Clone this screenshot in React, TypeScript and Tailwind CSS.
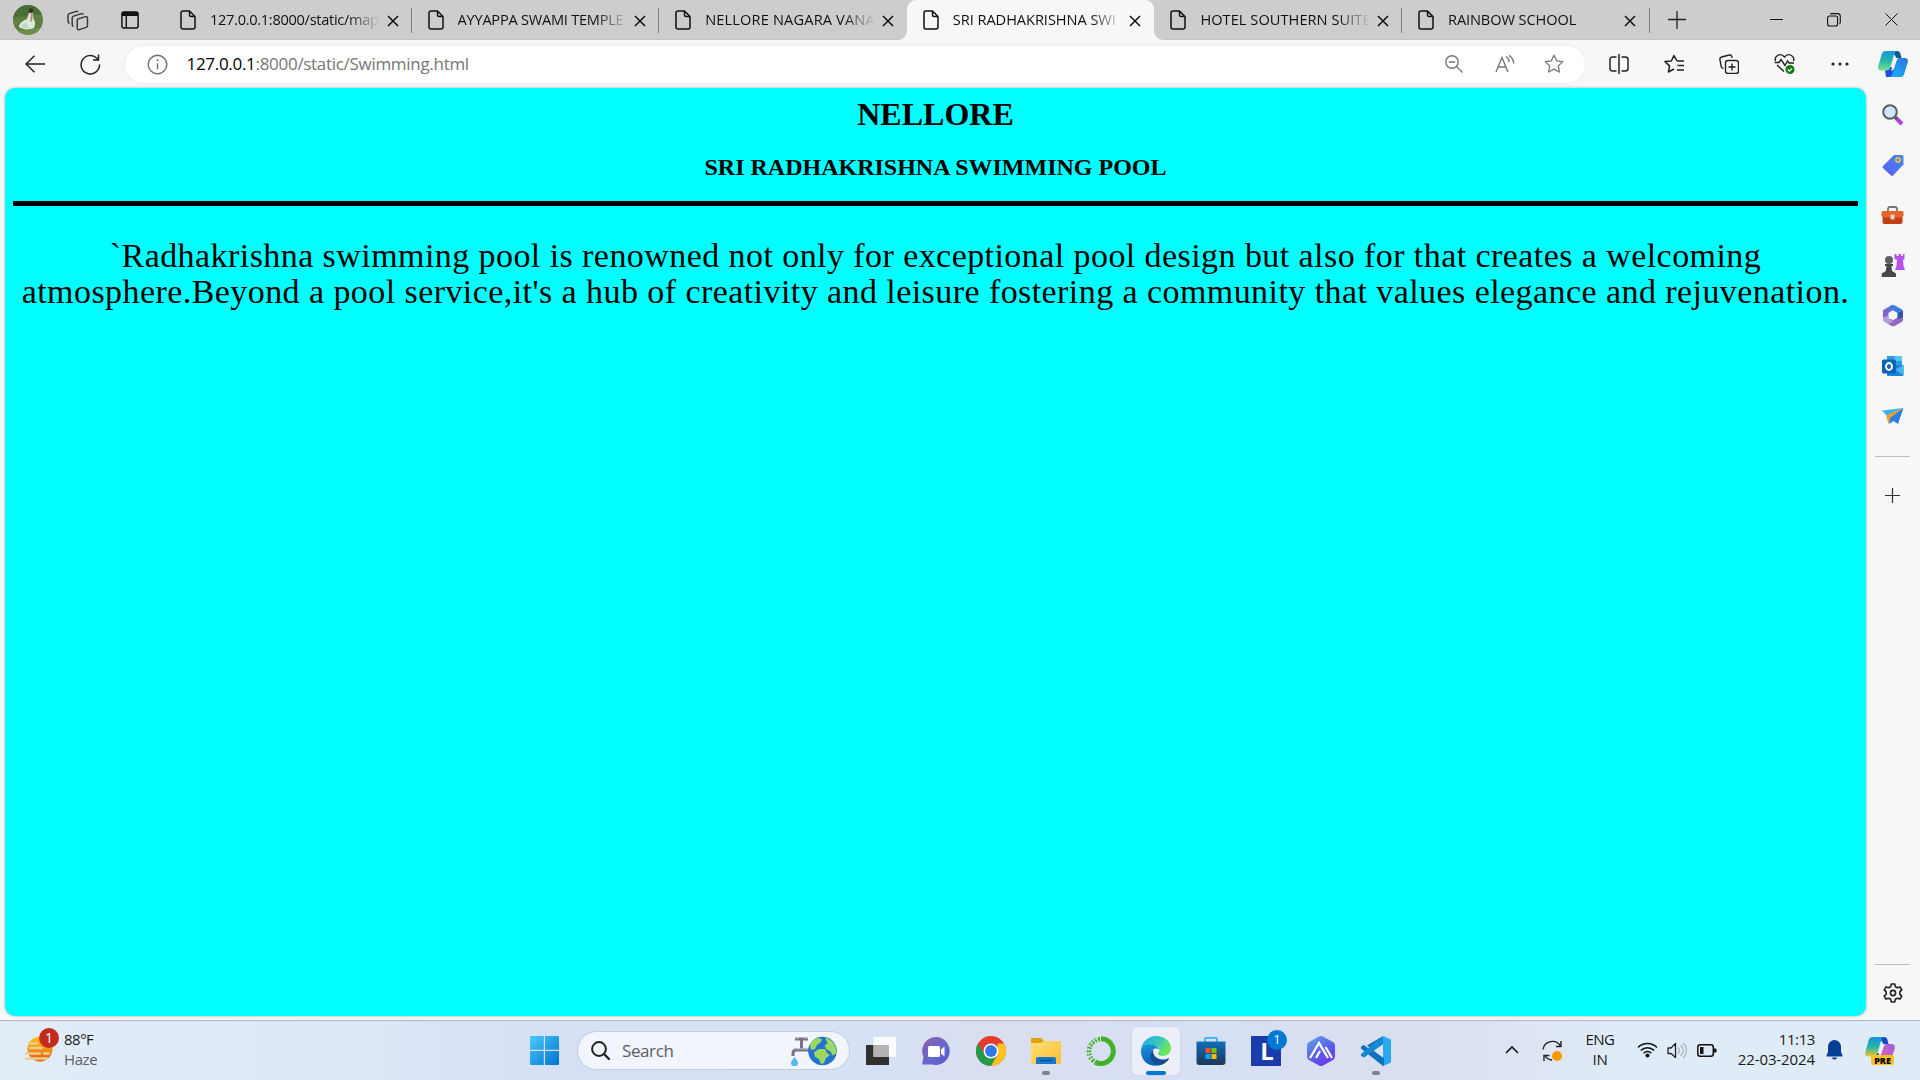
import React from "react";

const Svg = ({ w, h, vb, children, className = "" }: { w: number; h: number; vb?: string; children: React.ReactNode; className?: string }) => (
  <svg width={w} height={h} viewBox={vb ?? `0 0 ${w} ${h}`} fill="none" className={"block shrink-0 " + className}>{children}</svg>
);

const tabs = [
  { t: "127.0.0.1:8000/static/map", c: "tracking-[-0.3px]" },
  { t: "AYYAPPA SWAMI TEMPLE", c: "tracking-[-0.25px]" },
  { t: "NELLORE NAGARA VANA", c: "tracking-[0.15px]" },
  { t: "SRI RADHAKRISHNA SWI", c: "tracking-[-0.05px]" },
  { t: "HOTEL SOUTHERN SUITE", c: "tracking-[0.05px]" },
  { t: "RAINBOW SCHOOL", c: "tracking-[-0.1px]" },
];

function Tab({ t, c, active, sep }: { t: string; c: string; active: boolean; sep: boolean }) {
  return (
    <div className={"relative flex h-10 w-[247.6px] shrink-0 items-center pl-4 " + (active ? "rounded-t-[9px] bg-[#f7f7f7]" : "")}>
      {active && (
        <>
          <Svg w={9} h={9} className="absolute bottom-0 -left-[9px]"><path d="M9 0V9H0A9 9 0 0 0 9 0" fill="#f7f7f7" /></Svg>
          <Svg w={9} h={9} className="absolute bottom-0 -right-[9px]"><path d="M0 0V9H9A9 9 0 0 1 0 0" fill="#f7f7f7" /></Svg>
        </>
      )}
      <Svg w={16} h={20}><path d="M3 1H9.5L15 6.5V17a2 2 0 0 1-2 2H3a2 2 0 0 1-2-2V3a2 2 0 0 1 2-2ZM9.5 1V5a1.5 1.5 0 0 0 1.5 1.5H15" stroke="#111" strokeWidth="1.5" /></Svg>
      <div className="mb-[2px] ml-[14px] w-[170px] [mask-image:linear-gradient(to_right,black_138px,transparent_170px)]">
        <span className={"whitespace-nowrap text-[14.6px] text-[#111] " + c}>{t}</span>
      </div>
      <Svg w={12} h={12} className="mt-[1px] ml-[6.5px]"><path d="M1 1l10 10M11 1L1 11" stroke="#111" strokeWidth="1.5" /></Svg>
      {sep && <div className="absolute top-2 right-0 h-[25px] w-px bg-[#808080]" />}
    </div>
  );
}

const TabStrip = () => (
  <div className="flex h-10 items-center bg-[#cdcdcd] shadow-[inset_0_-1px_0_#c3c3c3]">
    <div className="flex w-[164px] shrink-0 items-center">
      <Svg w={30} h={30} className="ml-[13px]">
        <defs><clipPath id="av"><circle cx="15" cy="15" r="15" /></clipPath></defs>
        <g clipPath="url(#av)">
          <path d="M0 0h30v30H0z" fill="#5d8040" /><path d="M0 0h30v9L0 13z" fill="#486f35" /><path d="M4 26l22-3v7H4z" fill="#6f8f48" />
          <path d="M16 8l4 0 .5 6c2 2 2 6 .5 9-5 2-11 2-15-1 0-4 4-6 8-8z" fill="#dce9dc" /><path d="M8 20l5-3 3 6-6 0z" fill="#c1d8c6" />
          <circle cx="18" cy="5.5" r="2.3" fill="#4a2d29" /><path d="M18 8l2 1-1 7-2 1z" fill="#b98d78" />
        </g>
      </Svg>
      <Svg w={22} h={21} className="ml-[24px]">
        <g stroke="#333" strokeWidth="1.4" strokeLinejoin="round">
          <path d="M10.5 9.2l8-2.5a1.500 1.500 0 0 1 2 1.400v7.500a2 2 0 0 1-1.300 1.800l-7 2.300a1.500 1.500 0 0 1-2-1.400V10.500z" />
          <path d="M6.500 16.500l-.8-.6a2 2 0 0 1-.5-1.300V8a2 2 0 0 1 1.300-1.800l8-2.500a1.500 1.500 0 0 1 1.800.8" />
          <path d="M2.500 13.500L1.500 12.500a2 2 0 0 1-.5-1.300V5.500a2 2 0 0 1 1.300-1.800l7-2.400a1.500 1.500 0 0 1 1.800.6" />
        </g>
      </Svg>
      <Svg w={18} h={18} className="ml-[32px]"><rect x=".9" y=".9" width="16.2" height="16.2" rx="2" stroke="#111" strokeWidth="1.5" /><path d="M1 1h16v4H1z" fill="#111" /><path d="M5.300 5v12" stroke="#111" strokeWidth="1.4" /></Svg>
      <div className="ml-[25px] h-[25px] w-px bg-[#808080]" />
    </div>
    {tabs.map((x, i) => <Tab key={x.t} {...x} active={i === 3} sep={i !== 2 && i !== 3} />)}
    <Svg w={18} h={18} className="ml-[18px]"><path d="M9 0v18M0 8.500h18" stroke="#222" strokeWidth="1.3" /></Svg>
    <div className="ml-auto flex items-center pr-[22px]">
      <Svg w={13} h={13} className="mb-px"><path d="M0 6.500h13" stroke="#111" /></Svg>
      <Svg w={14} h={14} className="mb-px ml-[44px]"><rect x=".6" y="3" width="10" height="10" rx="2" stroke="#111" strokeWidth="1.1" /><path d="M3.500 1.200A1 1 0 0 1 4.300.6H10.500A2.800 2.800 0 0 1 13.300 3.400V9.500a1.500 1.500 0 0 1-.8 1.200" stroke="#111" strokeWidth="1.1" /></Svg>
      <Svg w={13} h={13} className="mb-px ml-[44px]"><path d="M.5 .5l12 12M12.500 .5l-12 12" stroke="#111" /></Svg>
    </div>
  </div>
);

const star = "M10 1.200l2.700 5.600 6.100.8-4.500 4.300 1.100 6.100L10 15.100 4.600 18l1.100-6.100L1.200 7.600l6.100-.8z";

const Copilot = ({ pre }: { pre?: boolean }) => (
  <Svg w={30} h={27} vb="0 0 30 27">
    <defs>
      <linearGradient id={pre ? "c1p" : "c1"} x1="0" y1="0" x2="0" y2="1"><stop offset="0" stopColor={pre ? "#1b8fe0" : "#1597d8"} /><stop offset=".5" stopColor="#25b5a9" /><stop offset="1" stopColor={pre ? "#f0c52c" : "#7ee08c"} /></linearGradient>
      <linearGradient id={pre ? "c2p" : "c2"} x1="1" y1="0" x2="0" y2="1"><stop offset="0" stopColor={pre ? "#9b5ce8" : "#2c72dc"} /><stop offset="1" stopColor={pre ? "#f56a9b" : "#16b6fa"} /></linearGradient>
    </defs>
    <path d="M14 0h5c2 0 3 1 3.500 3l1 4h-5z" fill={pre ? "#1747c8" : "#0e5a8e"} />
    <path d="M8 26h6c2 0 3-1 3.500-3L19 17l-8-1-4 3z" fill="#1c4fdc" />
    <path d="M7.500 0H19c-2 .6-2.500 2-3.200 4.500L12.500 16c-.8 2.500-2 3.500-4.500 3.500H3.500C.5 19.500-.3 17.500.3 15L3.600 3.500C4.300 1.200 5.500 0 7.500 0z" fill={pre ? "url(#c1p)" : "url(#c1)"} />
    <path d="M22 7h4.500c3 0 3.800 2 3.200 4.500L26.300 22.500C25.600 25 24.500 26 22.500 26H11.500c2-.5 2.700-2 3.300-4.500L18 10.500C18.700 8 19.500 7 22 7z" fill={pre ? "url(#c2p)" : "url(#c2)"} />
    <path d="M17 8.500h3c-1.500 1-2 2-2.500 4l-1.500 5c-.5 1.500-1.500 2-3 2 .5-1 1-2 1.300-3.500l1.700-6z" fill="#f7f7f7" />
  </Svg>
);

const Toolbar = () => (
  <div className="flex h-12 items-center bg-[#f7f7f7]">
    <Svg w={21} h={18} className="ml-[25px]"><path d="M9.500.8L1 9l8.500 8.200M1 9h19" stroke="#222" strokeWidth="1.5" /></Svg>
    <Svg w={21} h={21} className="ml-[34px]"><path d="M19.500 10.500A9.200 9.200 0 1 1 16.600 4l1.700 1.600M18.500 .5V6H13" stroke="#222" strokeWidth="1.5" /></Svg>
    <div className="ml-[24px] flex h-[37px] w-[1460px] items-center rounded-full bg-white pr-[21px] pl-[22px] shadow-[0_0_3px_rgba(0,0,0,0.08)]">
      <Svg w={21} h={21}><circle cx="10.5" cy="10.5" r="9.3" stroke="#6f6f6f" strokeWidth="1.4" /><path d="M10.500 9.300v6" stroke="#6f6f6f" strokeWidth="1.4" /><circle cx="10.5" cy="6.3" r="1" fill="#6f6f6f" /></Svg>
      <span className="ml-[18.500px] text-[17px] tracking-[-0.3px] whitespace-nowrap text-[#767676]"><span className="text-black">127.0.0.1</span>:8000/static/Swimming.html</span>
      <Svg w={18} h={18} className="ml-auto"><circle cx="7" cy="7" r="6.200" stroke="#767676" strokeWidth="1.4" /><path d="M11.500 11.500l6 6M3.800 7h6.400" stroke="#767676" strokeWidth="1.4" /></Svg>
      <Svg w={20} h={18} className="ml-[32px]"><path d="M1 17L7 2.500 13 17M3.300 12h7.500M11 1.500c2 1.300 3 3.200 3.200 5.500M14 .5c3 1.800 4.500 4.500 4.700 8" stroke="#767676" strokeWidth="1.4" /></Svg>
      <Svg w={20} h={20} className="ml-[29px]"><path d={star} stroke="#767676" strokeWidth="1.3" strokeLinejoin="round" /></Svg>
    </div>
    <Svg w={20} h={20} className="ml-[24px]"><path d="M7.500 3H3.500A2.500 2.500 0 0 0 1 5.500v9A2.500 2.500 0 0 0 3.500 17h4M12.500 3h4A2.500 2.500 0 0 1 19 5.500v9a2.500 2.500 0 0 1-2.500 2.500h-4M10 0v20" stroke="#222" strokeWidth="1.5" /></Svg>
    <Svg w={21} h={20} className="ml-[35px]"><path d="M13 7L10 1.500 7.300 7 1 7.600l4.600 4.300L4.400 18 10 15M13 7H20M13.500 11.500H20M13 16H20" stroke="#222" strokeWidth="1.5" strokeLinejoin="round" /></Svg>
    <Svg w={20} h={20} className="ml-[34px]"><rect x="6.500" y="6.500" width="13" height="13" rx="2.5" stroke="#222" strokeWidth="1.4" /><path d="M13 9.500v7M9.500 13h7M4.500 14.500l-1-.3a2 2 0 0 1-1.300-1.500L.9 5.500A2.200 2.200 0 0 1 2.700 3L10.200 1a2.200 2.200 0 0 1 2.600 1.600l.3 1.200" stroke="#222" strokeWidth="1.4" /></Svg>
    <Svg w={22} h={22} className="ml-[35px]"><path d="M1.500 8C0 3 6.500-1 10.500 4 14.500-1 21 3 19.500 8M.5 9.500H5L7 6.500l4 6 2.500-4.500 1.500 2h5M3 12l7 6.500" stroke="#222" strokeWidth="1.4" /><circle cx="16" cy="16.500" r="4.500" fill="#107c10" /><path d="M13.800 16.500l1.600 1.600 2.700-2.800" stroke="#fff" strokeWidth="1.2" /></Svg>
    <Svg w={18} h={4} className="ml-[35px]"><circle cx="2" cy="2" r="1.6" fill="#222" /><circle cx="9" cy="2" r="1.6" fill="#222" /><circle cx="16" cy="2" r="1.6" fill="#222" /></Svg>
    <div className="ml-[29px]"><Copilot /></div>
  </div>
);

const sideIcons = [
  <Svg w={22} h={22}><path d="M14 14l6 6" stroke="#b23fe8" strokeWidth="4" /><path d="M13 13l2 2" stroke="#555" strokeWidth="3" /><circle cx="8" cy="8" r="6.8" fill="#cfe6fa" stroke="#5a5d60" strokeWidth="2" /></Svg>,
  <Svg w={22} h={22}><defs><linearGradient id="tg" x1="0" y1="1" x2="1" y2="0"><stop stopColor="#5a5cf0" /><stop offset="1" stopColor="#3f8cf8" /></linearGradient></defs><path d="M12 1h8a1.500 1.500 0 0 1 1.500 1.500v8L11 21.500a1.500 1.500 0 0 1-2 0L1 14a1.500 1.500 0 0 1 0-2z" fill="url(#tg)" /><circle cx="16" cy="6" r="2.2" fill="#5b82e8" stroke="#f5c526" strokeWidth="1.5" /></Svg>,
  <Svg w={23} h={22}><path d="M7 7V4.500A2 2 0 0 1 9 3h5a2 2 0 0 1 2 1.500V7" stroke="#70757a" strokeWidth="1.8" /><path d="M1.500 11h20v7a2 2 0 0 1-2 2h-16a2 2 0 0 1-2-2z" fill="#c33e15" /><path d="M.5 8.500A1.500 1.500 0 0 1 2 7h19a1.500 1.500 0 0 1 1.500 1.500V12l-3 1.500h-16L.5 12z" fill="#e8622a" /><rect x="9.500" y="10.500" width="4" height="5" rx="1" fill="#d8d8d8" /></Svg>,
  <Svg w={24} h={24}><path d="M13.500 1h2v2h2V1h2.500v2h2V1h1.500v5l-1.500 1 .5 6 1.500 4H14l1.500-4 .5-6-2.500-1z" fill="#b850ee" /><circle cx="8" cy="7" r="4" fill="#606060" /><path d="M4 11h8v2h-1.500l.5 5 4 2.500V24H.8v-3.500l4-2.500.7-5H4z" fill="#484848" /></Svg>,
  <Svg w={22} h={23}><path d="M11 .500L2 5.500a2 2 0 0 0-1 1.700v9l5.500 2.300V9l6-4z" fill="#7a68cf" /><path d="M9 1.500a4 4 0 0 1 4 0l7 4a2 2 0 0 1 1 1.700V15l-5.500-2.500V9L6.500 4z" fill="#3d7fdc" /><path d="M21 11v5a2 2 0 0 1-1 1.700l-7 4a4 4 0 0 1-4 0L1.500 17l9-2.500 5-3z" fill="#9668bd" /><path d="M1 13.500l5.500-2v3l5 3-5 2.500-4.500-2.500a2 2 0 0 1-1-2z" fill="#b79be0" /><path d="M15.500 9L21 7v6l-5.500 2.500z" fill="#3550b0" /><path d="M11 6.800l4.300 2.400v4.600L11 16.200l-4.300-2.400V9.200z" fill="#f7f7f7" /></Svg>,
  <Svg w={22} h={22}><path d="M5 1h15v9H5z" fill="#2b9be4" /><path d="M12.500 1H20v5h-7.500z" fill="#50c8f5" /><path d="M5 10h16.500v10a1 1 0 0 1-1 1H6a1 1 0 0 1-1-1z" fill="#1885d6" /><path d="M21.500 10v10L13 14.500z" fill="#41b8f2" /><rect y="4.500" width="14" height="14" rx="1.5" fill="#0a64b8" /><ellipse cx="7" cy="11.500" rx="3" ry="3.500" stroke="#fff" strokeWidth="1.9" /></Svg>,
  <Svg w={22} h={22}><path d="M0 5.500L21.500 3 5 11z" fill="#35b3f3" /><path d="M4 10.500L21.500 3 8 14l-1.500 5z" fill="#f0a01e" /><path d="M8 13L21.500 3 16 19l-4.500-3L7 19z" fill="#2b7fe0" /></Svg>,
];

const Gear = () => (
  <Svg w={22} h={22}><path d="M9.300 1h3.400l.6 2.700 2 1.100 2.700-.9 1.800 3-2 1.900v2.400l2 1.900-1.800 3-2.700-.9-2 1.100-.6 2.700H9.300l-.6-2.700-2-1.100-2.700.9-1.800-3 2-1.900V8.800l-2-1.900 1.800-3 2.700.9 2-1.100z" transform="translate(0 1)" stroke="#222" strokeWidth="1.6" strokeLinejoin="round" /><circle cx="11" cy="11" r="2.600" stroke="#222" strokeWidth="1.6" /></Svg>
);

const Sidebar = () => (
  <div className="flex w-[53px] flex-col items-center">
    <div className="flex flex-col pt-[1.500px]">
      {sideIcons.map((ic, i) => <div key={i} className="flex h-[50.2px] items-center justify-center">{ic}</div>)}
    </div>
    <div className="mt-[15px] h-px w-[35px] bg-[#bdbdbd]" />
    <Svg w={15} h={15} className="mt-[31px]"><path d="M7.500 0v15M0 7.500h15" stroke="#333" strokeWidth="1.2" /></Svg>
    <div className="mt-auto h-px w-[35px] bg-[#bdbdbd]" />
    <div className="mt-[17px] mb-[16px]"><Gear /></div>
  </div>
);

const Page = () => (
  <div className="ml-[5px] h-[928px] w-[1861px] rounded-[10px] bg-[#00ffff] px-2 font-['Liberation_Serif',serif] text-black shadow-[0_0_3px_rgba(0,0,0,0.3)]">
    <h1 className="pt-[8px] text-center text-[32px] leading-[36px] font-bold">NELLORE</h1>
    <h2 className="mt-[21px] text-center text-[24px] leading-[28px] font-bold">SRI RADHAKRISHNA SWIMMING POOL</h2>
    <div className="mt-[20px] h-[5px] bg-black" />
    <p className="mt-[32px] text-center text-[34px] leading-[36px] tracking-[0.43px] whitespace-nowrap">
      `Radhakrishna swimming pool is renowned not only for exceptional pool design but also for that creates a welcoming
      <br />
      atmosphere.Beyond a pool service,it's a hub of creativity and leisure fostering a community that values elegance and rejuvenation.
    </p>
  </div>
);

const apps: { icon: React.ReactNode; run?: boolean; active?: boolean }[] = [
  { icon: <Svg w={30} h={28}><path d="M0 8h23v20H0z" fill="#30302f" /><path d="M7.500 0H30v20H7.500z" fill="#fff" opacity=".85" /><path d="M7.500 8H23v12H7.500z" fill="#b4b4b4" /></Svg> },
  { icon: <Svg w={30} h={30}><defs><linearGradient id="ch" x1="0" y1="0" x2="1" y2="1"><stop stopColor="#8f5fa8" /><stop offset=".6" stopColor="#6267cf" /><stop offset="1" stopColor="#5a55c8" /></linearGradient></defs><path d="M15 1a14 14 0 1 1-4 27.500H1L2.500 21A14 14 0 0 1 15 1z" fill="url(#ch)" /><rect x="7" y="10" width="12" height="11" rx="1.5" fill="#fff" /><path d="M20 13.500l3.500-3v10l-3.500-3z" fill="#fff" /></Svg> },
  { icon: <Svg w={30} h={30}><circle cx="15" cy="15" r="15" fill="#e33b2e" /><path d="M2 7.500A15 15 0 0 0 15 30l6.500-11.300H8.500z" fill="#229a4b" /><path d="M28 7.500A15 15 0 0 1 15 30l6.500-11.300V7.500z" fill="#fcc31e" /><circle cx="15" cy="15" r="7.5" fill="#fff" /><circle cx="15" cy="15" r="5.900" fill="#3278ec" /></Svg> },
  { icon: <Svg w={30} h={28}><defs><linearGradient id="fo" x1="0" y1="0" x2="1" y2="1"><stop stopColor="#ffe07a" /><stop offset="1" stopColor="#fbbd30" /></linearGradient></defs><path d="M0 2a1 1 0 0 1 1-1h9l3 3v5H0z" fill="#e0a10c" /><path d="M0 6h10l3-2h16a1 1 0 0 1 1 1v20a2 2 0 0 1-2 2H2a2 2 0 0 1-2-2z" fill="url(#fo)" /><path d="M5 27v-5a2 2 0 0 1 2-2h16a2 2 0 0 1 2 2v5z" fill="#1577cb" /><path d="M9 23.500h12" stroke="#0c4c8c" strokeWidth="1.2" /></Svg>, run: true },
  { icon: <Svg w={30} h={30}><path d="M15 2.700A12.400 12.400 0 1 1 9 26" stroke="#43b02a" strokeWidth="5" /><path d="M14 3A12.400 12.400 0 0 0 9 26" stroke="#43b02a" strokeWidth="4.5" strokeDasharray="2 1.4" /><path d="M11 2.500A13 13 0 0 0 6 24" stroke="#d9e0f0" strokeWidth="1" strokeDasharray="2.5 2" /></Svg> },
  { icon: <Svg w={30} h={30}><defs><linearGradient id="e1" x1="0" y1="0" x2="1" y2=".5"><stop stopColor="#2aa5e0" /><stop offset=".5" stopColor="#30c3c9" /><stop offset="1" stopColor="#6fea56" /></linearGradient><linearGradient id="e2" x1="0" y1="0" x2="0" y2="1"><stop stopColor="#1a94dd" /><stop offset="1" stopColor="#0d5cb5" /></linearGradient></defs><path d="M0 14C1 5 8 0 15 0c9 0 15 6 15 12 0 5-4 8-8 8-3 0-5-1-5-2.500 0-1 1.500-1.500 1.500-3.500 0-3-3.500-5-8-5C5 9 1 11.500 0 14z" fill="url(#e1)" /><path d="M0 14C1 10 5 8 10 8.500c4.500.3 7.500 2.500 8.300 5C14 10.500 9.500 14 10 19c.5 4.500 4 8 8 10.300C8 31.500-.5 25 0 14z" fill="url(#e2)" /><path d="M12.500 13.500c-1 2 0 7 4.500 9 4 2 8 1 10.500-.5.500-.2.700.2.500.6-2 4-6 6.500-10 6.800-5-1.400-9-6-8.500-10.500.2-2.500 1.300-4.400 3-5.400z" fill="#134d94" /></Svg>, run: true, active: true },
  { icon: <Svg w={30} h={30}><defs><linearGradient id="st" x1="0" y1="0" x2="0" y2="1"><stop stopColor="#0f6fba" /><stop offset="1" stopColor="#1d3558" /></linearGradient></defs><path d="M9 6V3a1.500 1.500 0 0 1 1.500-1.200h9A1.500 1.500 0 0 1 21 3v3" stroke="#29b5ee" strokeWidth="1.8" /><path d="M.5 5.500h29V26a3 3 0 0 1-3 3h-23a3 3 0 0 1-3-3z" fill="url(#st)" /><path d="M9.500 12h5v5h-5z" fill="#f35325" /><path d="M15.500 12h5v5h-5z" fill="#81bc06" /><path d="M9.500 18h5v5h-5z" fill="#05a6f0" /><path d="M15.500 18h5v5h-5z" fill="#ffba08" /></Svg> },
  { icon: <div className="relative flex size-[30px] items-center justify-center bg-[#1d3cab] pl-0.5 text-[24px] leading-none font-bold text-white">L<span className="absolute -top-[6px] left-[16px] flex size-5 items-center justify-center rounded-full bg-[#0078d4] text-[13px] leading-none font-normal">1</span></div> },
  { icon: <Svg w={30} h={30}><defs><linearGradient id="hx" x1="0" y1="0" x2=".6" y2="1"><stop stopColor="#61a6e6" /><stop offset=".6" stopColor="#5a62e8" /><stop offset="1" stopColor="#6e38ee" /></linearGradient></defs><path d="M13 .6a4 4 0 0 1 4 0l10 5.400a4 4 0 0 1 2 3.400v11.200a4 4 0 0 1-2 3.400l-10 5.400a4 4 0 0 1-4 0L3 24a4 4 0 0 1-2-3.400V9.400A4 4 0 0 1 3 6z" fill="url(#hx)" /><path d="M4 22L13 7l9 15M10 22l4-7M19.500 11l6.500 11" stroke="#fff" strokeWidth="2.2" /></Svg> },
  { icon: <Svg w={30} h={30}><path d="M22 0l7 3a1.500 1.500 0 0 1 1 1.500v21a1.500 1.500 0 0 1-1 1.500l-7 3z" fill="#2aa8f2" /><path d="M22 0L8 13 3 9 0 10.500v2L22 30l1-1V22L6 9.500z" fill="#0d72bd" /><path d="M0 18L22 0v8.500L3 21.500l-3-1.500z" fill="#1789d4" /><path d="M22 8.500L13 15l9 6.500z" fill="#dce2f2" /></Svg>, run: true },
];

const Taskbar = () => (
  <div className="flex h-[60px] items-center border-t border-[#aeb6c2] bg-[linear-gradient(to_right,#e1ecf7_0px,#deeaf6_250px,#d5e0f5_560px,#d6e1f6_850px,#d9deef_1000px,#d5e0f4_1200px,#dadfee_1400px,#dce3f1_1500px,#dfebf6_1620px,#dfebf7_1920px)]">
    <div className="flex w-[530px] items-center pb-[3px] pl-[25px] leading-5">
      <div className="relative">
        <Svg w={28} h={30}><defs><linearGradient id="su" x1="0" y1="0" x2="0" y2="1"><stop stopColor="#ffc918" /><stop offset="1" stopColor="#e8590c" /></linearGradient></defs><circle cx="15" cy="15" r="12.5" fill="url(#su)" /><path d="M4 9.500h8M5 14h12M0 19.500h15M19 19.500h5M0 24.500h22" stroke="#e6cf91" strokeWidth="2.3" strokeLinecap="round" /></Svg>
        <span className="absolute -top-[6px] left-[14px] flex size-5 items-center justify-center rounded-full bg-[#c42b1c] text-[14px] text-white">1</span>
      </div>
      <div className="ml-[11px] text-[15px] text-[#1b1b1b]"><span className="tracking-[-0.5px]">88°F</span><br /><span className="tracking-[-0.4px] text-[#5b6066]">Haze</span></div>
    </div>
    <Svg w={29} h={29}><defs><linearGradient id="wi" x1="0" y1="0" x2="1" y2="1"><stop stopColor="#4ccbfb" /><stop offset="1" stopColor="#0072d0" /></linearGradient></defs><path d="M1 0h12.800v13.800H0V1a1 1 0 0 1 1-1zM15 0h13a1 1 0 0 1 1 1v12.800H15zM0 15h13.800v14H1a1 1 0 0 1-1-1zM15 15h14v13a1 1 0 0 1-1 1H15z" fill="url(#wi)" /></Svg>
    <div className="ml-[17.500px] flex h-[39px] w-[273px] items-center rounded-full border border-[#c3cbdf] bg-[#f2f5fd] pr-[12px] pl-[13px]">
      <Svg w={19} h={19}><circle cx="8" cy="8" r="6.900" stroke="#222" strokeWidth="2" /><path d="M13 13l5 5" stroke="#222" strokeWidth="2.4" strokeLinecap="round" /></Svg>
      <span className="ml-[12.500px] text-[17px] tracking-[-0.4px] text-[#5a5d66]">Search</span>
      <Svg w={46} h={30} className="ml-auto">
        <path d="M4 3h13M10.500 2v11M2 20v-3a3 3 0 0 1 3-3h15" stroke="#77708a" strokeWidth="3" /><path d="M4 2h4M13 2h4M5 13h14" stroke="#c8c4d6" strokeWidth="1" /><path d="M3.500 21c2 3 3.500 4.500 3.500 6a3.500 3.500 0 0 1-7 0c0-1.500 1.500-3 3.500-6z" fill="#55b8ef" />
        <circle cx="31.500" cy="15" r="14.300" fill="#2272cf" />
        <path d="M19 9c1-3 4-6 8-7l4 1-1 3-4 3-2 4-4 1zM23 16l5-3 6 0 2 4 3 2-4 3-2 5-3 1-2-5-4-2zM34 1.500c5 1 9 5 10.500 9l1 7-4 2-2-4-4-2-2-4 3-2z" fill="#9ad860" />
      </Svg>
    </div>
    <div className="ml-[4px] flex">
      {apps.map((a, i) => (
        <div key={i} className="flex w-[55px] justify-center">
          <div className={"relative flex h-12 w-12 items-center justify-center rounded-[5px] " + (a.active ? "bg-[#eceff9] shadow-[0_0_1px_#9aa3b8]" : "")}>
            {a.icon}
            {a.run && <div className={"absolute bottom-0 h-1 rounded-full " + (a.active ? "w-5 bg-[#0078d4]" : "w-2 bg-[#7d818b]")} />}
          </div>
        </div>
      ))}
    </div>
    <div className="ml-auto flex items-center text-[15px] leading-5 text-[#1b1b1b]">
      <Svg w={14} h={8} className="mb-[2px]"><path d="M1 7l6-6 6 6" stroke="#111" strokeWidth="1.6" /></Svg>
      <Svg w={22} h={22} className="ml-[23px]"><path d="M1 9.500A9.500 9.500 0 0 1 18.500 6M19 1v5.500h-5M10 20A9 9 0 0 1 3 15.500M2 21v-5.500h5.500" stroke="#222" strokeWidth="1.4" /><circle cx="15" cy="16" r="5" fill="#ff9800" /></Svg>
      <div className="mb-[3px] ml-[19px] w-[34px] text-center"><span className="tracking-[-0.5px]">ENG</span><br /><span className="tracking-[-0.2px]">IN</span></div>
      <Svg w={21} h={16} className="mb-[2px] ml-[20px]"><path d="M1 5.500a13.500 13.500 0 0 1 19 0M3.800 8.500a9.500 9.500 0 0 1 13.400 0M6.600 11.200a5.500 5.500 0 0 1 7.800 0" stroke="#111" strokeWidth="1.5" /><circle cx="10.5" cy="13.5" r="2" fill="#111" /></Svg>
      <Svg w={20} h={17} className="mb-px ml-[9px]"><path d="M1 6h3l4.500-4.500v14L4 11.500H1z" stroke="#222" strokeWidth="1.3" strokeLinejoin="round" /><path d="M11 5.500a4 4 0 0 1 0 6M13.500 3a7 7 0 0 1 0 11M16 1a10 10 0 0 1 0 15" stroke="#a9b0ba" strokeWidth="1.2" /></Svg>
      <Svg w={20} h={13} className="mb-px ml-[10px]"><rect x=".8" y=".8" width="15.500" height="11.400" rx="2.5" stroke="#111" strokeWidth="1.5" /><rect x="3" y="3" width="3.500" height="7" fill="#111" /><path d="M17 4.500h1.500a1 1 0 0 1 1 1v2a1 1 0 0 1-1 1H17z" fill="#111" /></Svg>
      <div className="mb-[4px] ml-[20px] w-[78px] text-right whitespace-nowrap"><span className="tracking-[-0.4px]">11:13</span><br /><span className="tracking-[-0.1px]">22-03-2024</span></div>
      <Svg w={17} h={20} className="mb-px ml-[11px]"><path d="M8.500 0A6.500 6.500 0 0 1 15 6.500V12l1.500 3.500a.7.700 0 0 1-.7 1H1.200a.7.700 0 0 1-.7-1L2 12V6.500A6.500 6.500 0 0 1 8.500 0zM6 17.500h5a2.500 2 0 0 1-5 0z" fill="#053e97" /></Svg>
      <div className="relative mr-[25px] ml-[22px]"><Copilot pre /><span className="absolute top-[18px] left-[6px] flex h-[10px] w-[23px] items-center justify-center rounded-[2px] bg-[#fcc21b] text-[9px] leading-none font-extrabold text-black">PRE</span></div>
    </div>
  </div>
);

export default function App() {
  return (
    <div className="flex h-[1080px] w-[1920px] flex-col overflow-hidden bg-[#f7f7f7] font-['Open_Sans','Noto_Sans',sans-serif]">
      <TabStrip />
      <Toolbar />
      <div className="flex h-[932px] shrink-0">
        <Page />
        <Sidebar />
      </div>
      <Taskbar />
    </div>
  );
}
